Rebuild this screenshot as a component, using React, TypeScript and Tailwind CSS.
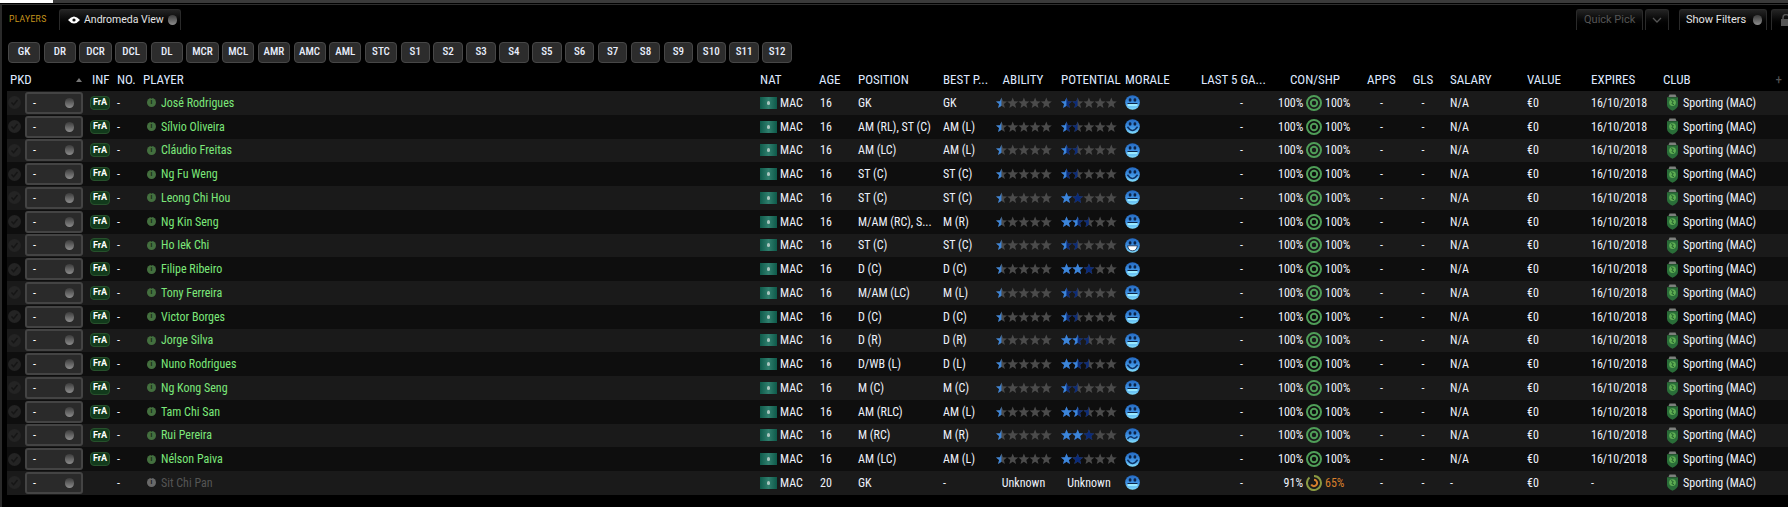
import React, { useId } from 'react';

const ROW_GRID =
  'grid grid-cols-[81px_27px_26px_617px_59px_39px_85px_55px_63px_63px_76px_65px_100px_37px_46px_79px_63px_73px_1fr]';

const POSITIONS = ['GK', 'DR', 'DCR', 'DCL', 'DL', 'MCR', 'MCL', 'AMR', 'AMC', 'AML', 'STC'];
const SUBS = ['S1', 'S2', 'S3', 'S4', 'S5', 'S6', 'S7', 'S8', 'S9', 'S10', 'S11', 'S12'];

type Mood = 'neutral' | 'smile' | 'grin' | 'sad';

interface Player {
  name: string;
  position: string;
  best: string;
  light: number;
  dark: number;
  mood: Mood;
}

const players: Player[] = [
  { name: 'José Rodrigues', position: 'GK', best: 'GK', light: 0.5, dark: 1.5, mood: 'neutral' },
  { name: 'Sílvio Oliveira', position: 'AM (RL), ST (C)', best: 'AM (L)', light: 0.5, dark: 1.5, mood: 'smile' },
  { name: 'Cláudio Freitas', position: 'AM (LC)', best: 'AM (L)', light: 0.5, dark: 1.5, mood: 'neutral' },
  { name: 'Ng Fu Weng', position: 'ST (C)', best: 'ST (C)', light: 0.5, dark: 1.5, mood: 'smile' },
  { name: 'Leong Chi Hou', position: 'ST (C)', best: 'ST (C)', light: 1, dark: 2, mood: 'neutral' },
  { name: 'Ng Kin Seng', position: 'M/AM (RC), S...', best: 'M (R)', light: 1.5, dark: 2.5, mood: 'neutral' },
  { name: 'Ho Iek Chi', position: 'ST (C)', best: 'ST (C)', light: 0.5, dark: 1.5, mood: 'grin' },
  { name: 'Filipe Ribeiro', position: 'D (C)', best: 'D (C)', light: 2, dark: 3, mood: 'neutral' },
  { name: 'Tony Ferreira', position: 'M/AM (LC)', best: 'M (L)', light: 0.5, dark: 1.5, mood: 'neutral' },
  { name: 'Victor Borges', position: 'D (C)', best: 'D (C)', light: 0.5, dark: 1.5, mood: 'neutral' },
  { name: 'Jorge Silva', position: 'D (R)', best: 'D (R)', light: 1.5, dark: 2.5, mood: 'neutral' },
  { name: 'Nuno Rodrigues', position: 'D/WB (L)', best: 'D (L)', light: 1.5, dark: 2.5, mood: 'smile' },
  { name: 'Ng Kong Seng', position: 'M (C)', best: 'M (C)', light: 0.5, dark: 1.5, mood: 'neutral' },
  { name: 'Tam Chi San', position: 'AM (RLC)', best: 'AM (L)', light: 1.5, dark: 2.5, mood: 'neutral' },
  { name: 'Rui Pereira', position: 'M (RC)', best: 'M (R)', light: 2, dark: 3, mood: 'sad' },
  { name: 'Nélson Paiva', position: 'AM (LC)', best: 'AM (L)', light: 1, dark: 2, mood: 'smile' },
];

const Knob = () => (
  <span className="w-[9px] h-[10px] rounded-full bg-linear-to-b from-[#3c3c3c] to-[#8e8e8e] shrink-0" />
);

const StarRow = ({ color, width }: { color: string; width: number }) => (
  <svg x="0" y="0" width={width} height="14" fill={color}>
    {[0, 1, 2, 3, 4].map((i) => (
      <path
        key={i}
        transform={`translate(${i * 11.2} 0)`}
        d="M5.5 1.5 L7 5.2 L11 5.5 L7.9 8 L8.9 12 L5.5 9.8 L2.1 12 L3.1 8 L0 5.5 L4 5.2 Z"
      />
    ))}
  </svg>
);

const Stars = ({ light, dark }: { light: number; dark: number }) => (
  <svg width="57" height="14" className="block">
    <StarRow color="#4b4b4b" width={57} />
    {dark > 0 && <StarRow color="#0b2b78" width={dark * 11.2 - 0.2} />}
    <StarRow color="#3c85d9" width={light * 11.2 - 0.2} />
  </svg>
);

const Face = ({ mood }: { mood: Mood }) => {
  const id = useId();
  return (
    <svg width="15" height="15" viewBox="0 0 15 15" className="block">
      <defs>
        <linearGradient id={id} x1="0" y1="0" x2="0" y2="1">
          <stop offset="0" stopColor="#2468c0" />
          <stop offset="0.55" stopColor="#3f94e6" />
          <stop offset="1" stopColor="#86e2ff" />
        </linearGradient>
      </defs>
      <circle cx="7.5" cy="7.5" r="7.3" fill={`url(#${id})`} />
      <rect x="3.8" y="3.2" width="2.6" height="3.4" rx="1.2" fill="#0c2347" />
      <rect x="8.6" y="3.2" width="2.6" height="3.4" rx="1.2" fill="#0c2347" />
      {mood === 'neutral' && (
        <>
          <rect x="2.5" y="8" width="10" height="1" fill="#0c2347" />
          <rect x="2.5" y="9" width="10" height="2.2" fill="#9aeaff" />
        </>
      )}
      {mood === 'smile' && (
        <path d="M2.4 7.8 Q7.5 15 12.6 7.8" fill="none" stroke="#0f3468" strokeWidth="1.5" />
      )}
      {mood === 'grin' && (
        <path d="M2.6 7.8 L12.4 7.8 Q11.6 12.8 7.5 12.8 Q3.4 12.8 2.6 7.8 Z" fill="#ffffff" stroke="#0c2347" strokeWidth="0.8" />
      )}
      {mood === 'sad' && (
        <path d="M2.5 11 Q5 7.5 7.5 9.5 Q10 11.5 12.5 8.5" fill="none" stroke="#0f3468" strokeWidth="1.5" />
      )}
    </svg>
  );
};

const Ring = ({ low }: { low?: boolean }) => (
  <svg width="16" height="16" viewBox="0 0 16 16" className="block shrink-0">
    {low ? (
      <>
        <path d="M8 1 A7 7 0 1 1 3.5 2.6" fill="none" stroke="#8a9a42" strokeWidth="2" />
        <path d="M8 4.8 A3.2 3.2 0 1 1 5.2 9.6" fill="none" stroke="#d9802c" strokeWidth="2" />
      </>
    ) : (
      <>
        <circle cx="8" cy="8" r="7" fill="none" stroke="#4f9e58" strokeWidth="2" />
        <circle cx="8" cy="8" r="3.2" fill="none" stroke="#4f9e58" strokeWidth="2" />
      </>
    )}
  </svg>
);

const Flag = () => (
  <span className="w-[17px] h-[12px] shrink-0 flex items-center justify-center bg-linear-to-r from-[#0c5a4a] via-[#2f7f6e] to-[#0c5a4a]">
    <span className="w-[3px] h-[4px] rounded-full bg-[#a9c6be]" />
  </span>
);

const Crest = () => (
  <svg width="13" height="17" viewBox="0 0 13 17" className="block shrink-0">
    <path d="M2.5 3 L3.5 0.6 L9.5 0.6 L10.5 3 Z" fill="#7d807d" />
    <path d="M1 3.2 H12 V10.5 Q12 14.5 6.5 16.8 Q1 14.5 1 10.5 Z" fill="#2a6e39" />
    <circle cx="6.5" cy="8.6" r="3.4" fill="#5dad52" />
    <path d="M5.2 6.6 Q8.6 7.4 6.6 8.6 Q4.6 9.8 8 10.6" fill="none" stroke="#1e5a2c" strokeWidth="1" />
  </svg>
);

const InfoIcon = ({ muted }: { muted?: boolean }) => (
  <span
    className={`w-[9px] h-[9px] rounded-full flex items-center justify-center text-[7px] leading-none font-bold shrink-0 ${
      muted ? 'bg-[#6a6a6a] text-[#1a1a1a]' : 'bg-[#44703f] text-[#12240f]'
    }`}
  >
    i
  </span>
);

const CheckDot = () => (
  <span className="w-[13px] h-[13px] rounded-full bg-[#242424] flex items-center justify-center shrink-0">
    <svg width="9" height="9" viewBox="0 0 9 9">
      <path d="M1.5 4.5 L3.6 6.8 L7.5 2" fill="none" stroke="#151515" strokeWidth="1.4" />
    </svg>
  </span>
);

const Dropdown = () => (
  <span className="w-[58px] h-[22px] ml-[4px] pl-[6px] pr-[7px] rounded-[3px] border-2 border-[#444] bg-[#2a2a2a] flex items-center justify-between text-white">
    <span>-</span>
    <Knob />
  </span>
);

const Header = ({ label, className = '' }: { label: string; className?: string }) => (
  <div className={`flex items-center whitespace-nowrap ${className}`}>{label}</div>
);

const PlayerRow = ({ player, odd }: { player: Player; odd: boolean }) => (
  <div className={`${ROW_GRID} h-[23.76px] items-center ${odd ? 'bg-[#1a1a1a]' : 'bg-[#0e0e0e]'}`}>
    <div className="flex items-center pl-[1px]">
      <CheckDot />
      <Dropdown />
    </div>
    <div className="pl-[2px]">
      <span className="w-[20px] h-[14px] rounded-[4px] border border-[#27512c] bg-[#123a1c] text-white text-[9px] font-bold flex items-center justify-center [font-stretch:100%]">
        FrA
      </span>
    </div>
    <div className="pl-[2px]">-</div>
    <div className="pl-[6px] flex items-center gap-[5px] text-[#7ce87a]">
      <InfoIcon />
      <span>{player.name}</span>
    </div>
    <div className="pl-[2px] flex items-center gap-[3px]">
      <Flag />
      <span>MAC</span>
    </div>
    <div className="pl-[3px]">16</div>
    <div className="pl-[2px] whitespace-nowrap overflow-hidden">{player.position}</div>
    <div className="pl-[2px]">{player.best}</div>
    <div>
      <Stars light={0.5} dark={0} />
    </div>
    <div className="pl-[2px]">
      <Stars light={player.light} dark={player.dark} />
    </div>
    <div className="pl-[3px]">
      <Face mood={player.mood} />
    </div>
    <div className="text-right pr-[20px]">-</div>
    <div className="pl-[15px] flex items-center gap-[3px]">
      <span className="w-[25px] text-right">100%</span>
      <Ring />
      <span>100%</span>
    </div>
    <div className="text-center">-</div>
    <div className="text-center">-</div>
    <div className="pl-[4px]">N/A</div>
    <div className="pl-[2px]">€0</div>
    <div className="pl-[3px]">16/10/2018</div>
    <div className="pl-[5px] flex items-center gap-[4px]">
      <Crest />
      <span>Sporting (MAC)</span>
    </div>
  </div>
);

// last row has no contract, so it differs in most cells
const UnknownRow = () => (
  <div className={`${ROW_GRID} h-[23.76px] items-center bg-[#1a1a1a]`}>
    <div className="flex items-center pl-[1px]">
      <CheckDot />
      <Dropdown />
    </div>
    <div />
    <div className="pl-[2px]">-</div>
    <div className="pl-[6px] flex items-center gap-[5px] text-[#555]">
      <InfoIcon muted />
      <span>Sit Chi Pan</span>
    </div>
    <div className="pl-[2px] flex items-center gap-[3px]">
      <Flag />
      <span>MAC</span>
    </div>
    <div className="pl-[3px]">20</div>
    <div className="pl-[2px]">GK</div>
    <div className="pl-[2px]">-</div>
    <div className="text-center pr-[7px] -ml-[1px]">Unknown</div>
    <div className="text-center pr-[3px]">Unknown</div>
    <div className="pl-[3px]">
      <Face mood="neutral" />
    </div>
    <div className="text-right pr-[20px]">-</div>
    <div className="pl-[15px] flex items-center gap-[3px]">
      <span className="w-[25px] text-right">91%</span>
      <Ring low />
      <span className="text-[#d9802c]">65%</span>
    </div>
    <div className="text-center">-</div>
    <div className="text-center">-</div>
    <div className="pl-[4px]">-</div>
    <div className="pl-[2px]">€0</div>
    <div className="pl-[3px]">-</div>
    <div className="pl-[5px] flex items-center gap-[4px]">
      <Crest />
      <span>Sporting (MAC)</span>
    </div>
  </div>
);

const PositionButton = ({ label, wide }: { label: string; wide: boolean }) => (
  <button
    className={`h-[21px] ${
      wide ? 'w-[32.2px]' : 'w-[29.4px]'
    } rounded-[4px] border border-[#474747] bg-[#2c2c2c] text-[#e8eefc] text-[11px] font-medium flex items-center justify-center`}
  >
    {label}
  </button>
);

const TOP_BUTTON =
  'h-[21px] rounded-t-[3px] border-t border-x border-[#2a2a2a] bg-linear-to-b from-[#242424] to-black flex items-center text-[11px] whitespace-nowrap';

export default function App() {
  return (
    <div className="w-[1788px] h-[507px] bg-black text-[#eef2fb] text-[12px] font-['Roboto',sans-serif] [font-stretch:87%] overflow-hidden flex flex-col">
      {/* window chrome */}
      <div className="h-[3px] bg-[#3a3a3a] shrink-0 flex">
        <div className="w-[53px] bg-white" />
      </div>
      <div className="h-[1px] bg-black shrink-0" />
      <div className="h-[1px] bg-[#2e2e2e] shrink-0" />

      <div className="flex-1 border-l-2 border-[#2a2a2a] pl-[5px] flex flex-col min-h-0">
        {/* Toolbar */}
        <div className="h-[21px] mt-[4px] flex items-center shrink-0 [font-stretch:100%]">
          <span className="ml-[2px] w-[50px] text-[#c8961c] text-[8.5px] tracking-[0.3px]">PLAYERS</span>
          <div className={`${TOP_BUTTON} w-[122px] pl-[8px] gap-[4px]`}>
            <svg width="12" height="8" viewBox="0 0 12 8" className="shrink-0">
              <path d="M0 4 Q6 -3 12 4 Q6 11 0 4 Z" fill="#fff" />
              <circle cx="6" cy="4" r="1.6" fill="#111" />
            </svg>
            <span className="text-[#e4e4e4] text-[10.5px]">Andromeda View</span>
            <Knob />
          </div>
          <div className="flex-1" />
          <div className={`${TOP_BUTTON} w-[67px] pl-[7px] text-[#555]`}>Quick Pick</div>
          <div className={`${TOP_BUTTON} w-[24px] ml-[2px] justify-center`}>
            <svg width="10" height="6" viewBox="0 0 10 6">
              <path d="M1 1 L5 5 L9 1" fill="none" stroke="#555" strokeWidth="1.3" />
            </svg>
          </div>
          <div className={`${TOP_BUTTON} w-[88px] ml-[10px] pl-[6px] gap-[7px] text-[#e4e4e4]`}>
            Show Filters
            <Knob />
          </div>
          <div className={`${TOP_BUTTON} w-[19px] ml-[4px] pl-[8px] mr-[-2px] overflow-hidden`}>
            <svg width="12" height="12" viewBox="0 0 12 12" className="shrink-0">
              <rect x="1" y="5" width="10" height="7" fill="#555" />
              <path d="M3 5 V3.5 A3 3 0 0 1 9 3.5" fill="none" stroke="#555" strokeWidth="1.5" />
            </svg>
          </div>
        </div>

        {/* Position filters */}
        <div className="mt-[12px] flex gap-[3.5px] shrink-0 pl-[1px]">
          {POSITIONS.map((p) => (
            <PositionButton key={p} label={p} wide />
          ))}
          {SUBS.map((p) => (
            <PositionButton key={p} label={p} wide={false} />
          ))}
        </div>

        {/* Column headers */}
        <div className={`${ROW_GRID} h-[21px] mt-[7px] pb-[3px] shrink-0 text-[13px] text-[#dfe8ff] [font-stretch:75%]`}>
          <div className="pl-[3px] flex items-center justify-between pr-[6px]">
            PKD
            <svg width="6" height="4" viewBox="0 0 6 4">
              <path d="M0 4 L3 0 L6 4 Z" fill="#777" />
            </svg>
          </div>
          <Header label="INF" className="pl-[4px]" />
          <Header label="NO." className="pl-[2px]" />
          <Header label="PLAYER" className="pl-[2px]" />
          <Header label="NAT" className="pl-[2px]" />
          <Header label="AGE" className="pl-[2px]" />
          <Header label="POSITION" className="pl-[2px]" />
          <Header label="BEST P..." className="pl-[2px]" />
          <Header label="ABILITY" className="justify-center pr-[9px]" />
          <Header label="POTENTIAL" className="pl-[2px]" />
          <Header label="MORALE" className="pl-[3px]" />
          <Header label="LAST 5 GA..." className="pl-[3px]" />
          <Header label="CON/SHP" className="pl-[27px]" />
          <Header label="APPS" className="pl-[4px]" />
          <Header label="GLS" className="justify-center" />
          <Header label="SALARY" className="pl-[4px]" />
          <Header label="VALUE" className="pl-[2px]" />
          <Header label="EXPIRES" className="pl-[3px]" />
          <div className="flex items-center justify-between pl-[2px] pr-[6px]">
            CLUB
            <span className="text-[#555] text-[13px]">+</span>
          </div>
        </div>

        {/* Rows */}
        <div className="shrink-0">
          {players.map((p, i) => (
            <PlayerRow key={p.name} player={p} odd={i % 2 === 0} />
          ))}
          <UnknownRow />
        </div>
      </div>
    </div>
  );
}
